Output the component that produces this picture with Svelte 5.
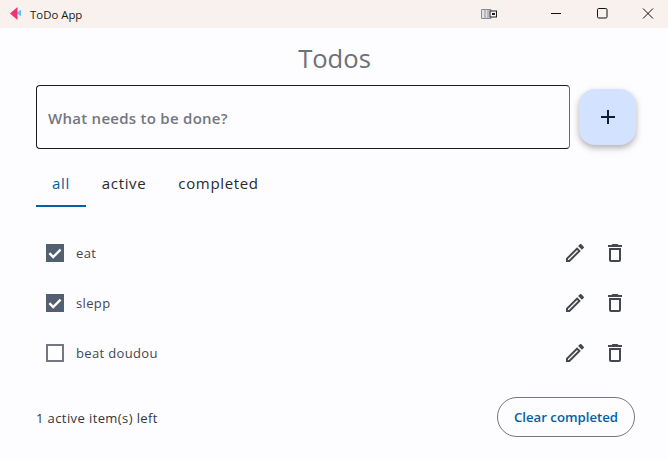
<script>
  const tabs = [
    { label: 'all', selected: true },
    { label: 'active', selected: false },
    { label: 'completed', selected: false }
  ];
  const todos = [
    { text: 'eat', done: true },
    { text: 'slepp', done: true },
    { text: 'beat doudou', done: false }
  ];
</script>

<div class="window">
  <header class="titlebar">
    <svg class="logo" width="16" height="16" viewBox="0 0 16 16" aria-hidden="true">
      <path d="M13 3.5 L13 10.5 L8.5 7 Z" fill="#5ec4f2" />
      <path d="M9.5 1 L9.5 14 L2 7.5 Z" fill="#f0306f" />
    </svg>
    <span class="app-name">ToDo App</span>
    <svg class="snap" width="17" height="12" viewBox="0 0 17 12" aria-hidden="true">
      <path d="M1.5 1.5H11V10.5H1.5Z" fill="#e4e4ea" stroke="#8a8a92" />
      <path d="M5 2V10M8 2V10" stroke="#8a8a92" />
      <rect x="10" y="3" width="6.5" height="6" fill="#f8f1ee" stroke="#222" />
      <rect x="12" y="5" width="3" height="2" fill="#222" />
    </svg>
    <div class="controls">
      <svg width="46" height="28" viewBox="0 0 46 28" aria-hidden="true"><path d="M21 13.5H31" stroke="#111" fill="none" /></svg>
      <svg width="46" height="28" viewBox="0 0 46 28" aria-hidden="true"><rect x="21.5" y="8.5" width="9.5" height="9.5" rx="1.2" stroke="#111" fill="none" /></svg>
      <svg width="46" height="28" viewBox="0 0 46 28" aria-hidden="true"><path d="M21 8.5L31 18.5M31 8.5L21 18.5" stroke="#111" fill="none" /></svg>
    </div>
  </header>

  <main class="content">
    <h1>Todos</h1>

    <div class="entry">
      <div class="field">What needs to be done?</div>
      <button class="fab" aria-label="Add">
        <svg width="16" height="16" viewBox="0 0 16 16" aria-hidden="true"><path d="M8 1V15M1 8H15" stroke="#0f1f33" stroke-width="2" fill="none" /></svg>
      </button>
    </div>

    <nav class="tabs">
      {#each tabs as tab}
        <span class="tab" class:selected={tab.selected}>{tab.label}</span>
      {/each}
    </nav>

    <ul class="list">
      {#each todos as todo}
        <li class="row">
          <span class="check" class:done={todo.done}>
            {#if todo.done}
              <svg width="18" height="18" viewBox="0 0 18 18" aria-hidden="true"><path d="M3.4 9.2L7.2 13L14.6 5.6" stroke="#fff" stroke-width="2.4" fill="none" /></svg>
            {/if}
          </span>
          <span class="text">{todo.text}</span>
          <svg class="icon" width="24" height="24" viewBox="0 0 24 24" aria-hidden="true">
            <path d="M14.06 9.02l.92.92L5.92 19H5v-.92l9.06-9.06M17.66 3c-.25 0-.51.1-.7.29l-1.83 1.83 3.75 3.75 1.83-1.83c.39-.39.39-1.02 0-1.41l-2.34-2.34c-.2-.2-.45-.29-.71-.29zm-3.6 3.19L3 17.25V21h3.75L17.81 9.94l-3.75-3.75z" fill="#44474f" />
          </svg>
          <svg class="icon trash" width="24" height="24" viewBox="0 0 24 24" aria-hidden="true">
            <path d="M6 19a2 2 0 0 0 2 2h8a2 2 0 0 0 2-2V7H6v12zM8 9h8v10H8V9zm7.5-5l-1-1h-5l-1 1H5v2h14V4h-3.5z" fill="#44474f" />
          </svg>
        </li>
      {/each}
    </ul>

    <footer class="footer">
      <span class="left">1 active item(s) left</span>
      <button class="clear">Clear completed</button>
    </footer>
  </main>
</div>

<style>
  :global(body) {
    margin: 0;
    background: #fdfcff;
  }
  .window {
    width: 668px;
    height: 460px;
    overflow: hidden;
    background: #fdfcff;
    font-family: "Open Sans", "Noto Sans", sans-serif;
    color: #1b1b1f;
  }
  .titlebar {
    height: 28px;
    background: #f8f1ee;
    display: flex;
    align-items: center;
    padding-left: 8px;
    font-size: 11.4px;
  }
  .logo {
    flex: none;
    margin-right: 6px;
  }
  .app-name {
    flex: 1;
    color: #1a1a1a;
  }
  .snap {
    margin-right: 33px;
  }
  .controls {
    display: flex;
    height: 28px;
  }
  .content {
    padding: 0 32px 0 36px;
  }
  h1 {
    margin: 0 3px 0 0;
    height: 57px;
    line-height: 62px;
    font-size: 25.6px;
    font-weight: 400;
    text-align: center;
    color: #6f7176;
  }
  .entry {
    display: flex;
    align-items: center;
    gap: 9px;
    height: 64px;
  }
  .field {
    box-sizing: border-box;
    flex: 1;
    height: 64px;
    border: 1px solid #1b1b1f;
    border-right-color: #6a6a6e;
    border-radius: 4px;
    padding: 2px 0 0 11px;
    display: flex;
    align-items: center;
    font-size: 15px;
    font-weight: 600;
    letter-spacing: 0.27px;
    color: #74777f;
  }
  .fab {
    flex: none;
    width: 57px;
    height: 56px;
    border: 0;
    border-radius: 16px;
    background: #d3e3ff;
    box-shadow: 0 3px 6px rgba(0, 0, 0, 0.3);
    display: flex;
    align-items: center;
    justify-content: center;
    padding: 0;
  }
  .tabs {
    display: flex;
    height: 48px;
    margin-top: 10px;
    font-size: 15px;
  }
  .tab {
    box-sizing: border-box;
    padding: 0 16px;
    height: 48px;
    line-height: 49px;
    letter-spacing: 0.65px;
    color: #2a2a2e;
  }
  .selected {
    color: #0061a4;
    border-bottom: 2px solid #0061a4;
  }
  .list {
    list-style: none;
    margin: 21px 0 0;
    padding: 0;
  }
  .row {
    height: 50px;
    display: flex;
    align-items: center;
    padding: 0 9px 0 10px;
  }
  .check {
    box-sizing: border-box;
    width: 18px;
    height: 18px;
    border: 2px solid #74777f;
    margin-right: 12px;
    flex: none;
  }
  .check.done {
    background: #535f70;
    border: 0;
  }
  .check svg {
    display: block;
  }
  .text {
    flex: 1;
    font-size: 13px;
    letter-spacing: 0.35px;
    color: #44474f;
  }
  .icon {
    flex: none;
  }
  .trash {
    margin-left: 16px;
  }
  .footer {
    display: flex;
    align-items: center;
    justify-content: space-between;
    margin-top: 18px;
    height: 42px;
  }
  .left {
    padding-top: 1px;
    font-size: 13px;
    letter-spacing: 0.4px;
    color: #33353b;
  }
  .clear {
    width: 138px;
    height: 40px;
    margin-right: 1px;
    border: 1px solid #74777f;
    border-radius: 20px;
    background: transparent;
    font: 600 13.2px "Open Sans", "Noto Sans", sans-serif;
    color: #0061a4;
    padding: 0;
  }
</style>
